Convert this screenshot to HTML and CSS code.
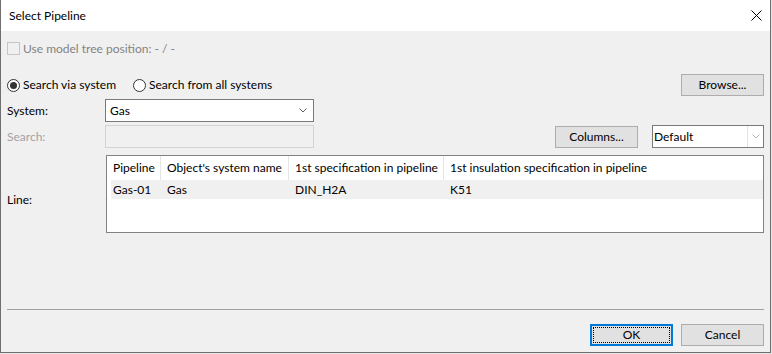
FILE: index.html
```html
<!DOCTYPE html>
<html lang="en">
<head>
  <meta charset="UTF-8">
  <title>Select Pipeline</title>
  <link rel="stylesheet" href="styles.css">
</head>
<body>
  <div class="dialog">
    <header class="titlebar">
      <span class="title">Select Pipeline</span>
      <span class="close">
        <svg width="11" height="11" viewBox="0 0 11 11"><path d="M0.5 0.5L10.5 10.5M10.5 0.5L0.5 10.5" stroke="#000" stroke-width="1" fill="none"/></svg>
      </span>
    </header>

    <main class="content">
      <div class="check-row">
        <span class="checkbox"></span>
        <span>Use model tree position: - / -</span>
      </div>

      <div class="mode-row">
        <label class="radio first"><span class="radio-dot checked"></span>Search via system</label>
        <label class="radio"><span class="radio-dot"></span>Search from all systems</label>
        <button class="btn browse">Browse...</button>
      </div>

      <div class="form">
        <span class="label">System:</span>
        <div class="combo system-combo">
          <span class="combo-text">Gas</span>
          <svg class="chevron" width="8" height="5" viewBox="0 0 8 5"><polyline points="0.5,0.5 4,4 7.5,0.5" stroke="#606060" fill="none"/></svg>
        </div>

        <span class="label disabled">Search:</span>
        <div class="search-row">
          <div class="search-input"></div>
          <button class="btn columns">Columns...</button>
          <div class="combo view-combo">
            <span class="combo-text">Default</span>
            <span class="combo-drop">
              <svg width="8" height="5" viewBox="0 0 8 5"><polyline points="0.5,0.5 4,4 7.5,0.5" stroke="#b4b4b4" fill="none"/></svg>
            </span>
          </div>
        </div>

        <span class="label line-label">Line:</span>
        <div class="list">
          <div class="list-head">
            <span>Pipeline</span>
            <span>Object's system name</span>
            <span>1st specification in pipeline</span>
            <span>1st insulation specification in pipeline</span>
          </div>
          <div class="list-row">
            <span>Gas-01</span>
            <span>Gas</span>
            <span>DIN_H2A</span>
            <span>K51</span>
          </div>
        </div>
      </div>

      <hr class="separator">

      <div class="actions">
        <button class="btn ok">OK</button>
        <button class="btn">Cancel</button>
      </div>
    </main>
  </div>
</body>
</html>
```

FILE: styles.css
```css
html, body {
  margin: 0;
  padding: 0;
  background: #e6e6e6;
}
body {
  font-family: "Segoe UI", Lato, "Noto Sans", sans-serif;
  font-size: 12px;
  line-height: 16px;
  color: #000;
}
.dialog {
  width: 771px;
  height: 353px;
  box-sizing: border-box;
  border: 1px solid #6f6f6f;
  border-top: none;
  background: #f0f0f0;
  display: flex;
  flex-direction: column;
}
.titlebar {
  height: 31px;
  background: #fff;
  display: flex;
  align-items: center;
  padding-left: 8px;
  flex-shrink: 0;
}
.title {
  flex: 1;
  padding-top: 1px;
}
.close {
  width: 28px;
  height: 31px;
  display: flex;
  align-items: center;
  justify-content: center;
}
.content {
  padding: 0 6px 0 6px;
  display: flex;
  flex-direction: column;
}

/* checkbox row */
.check-row {
  margin-top: 11px;
  height: 13px;
  display: flex;
  align-items: center;
  color: #838383;
}
.checkbox {
  width: 11px;
  height: 11px;
  border: 1px solid #c6c6c6;
  background: #f0f0f0;
  margin-right: 3px;
}

/* search mode */
.mode-row {
  margin-top: 19px;
  height: 22px;
  display: flex;
  align-items: center;
}
.radio {
  display: flex;
  align-items: center;
}
.radio.first {
  width: 126px;
}
.radio-dot {
  width: 11px;
  height: 11px;
  border: 1px solid #333;
  border-radius: 50%;
  background: #fff;
  margin-right: 3px;
  display: flex;
  align-items: center;
  justify-content: center;
}
.radio-dot.checked::after {
  content: "";
  width: 7px;
  height: 7px;
  border-radius: 50%;
  background: #333;
}
.btn {
  font: inherit;
  color: #000;
  background: #e1e1e1;
  border: 1px solid #adadad;
  width: 83px;
  height: 22px;
  padding: 0;
  border-radius: 0;
}
.browse {
  margin-left: auto;
}

/* form grid */
.form {
  margin-top: 3px;
  display: grid;
  grid-template-columns: 98px 1fr;
  row-gap: 3px;
}
.label {
  display: flex;
  align-items: center;
}
.label.disabled {
  color: #a3a3a3;
}
.combo {
  height: 23px;
  box-sizing: border-box;
  border: 1px solid #7a7a7a;
  background: #fff;
  display: flex;
  align-items: center;
}
.system-combo {
  width: 209px;
  padding: 0 4px 0 4px;
}
.combo-text {
  flex: 1;
}
.chevron {
  margin-right: 2px;
}
.search-row {
  display: flex;
  align-items: center;
}
.search-input {
  width: 209px;
  height: 23px;
  box-sizing: border-box;
  border: 1px solid #d4d4d4;
  background: #f0f0f0;
}
.columns {
  margin-left: auto;
  margin-right: 14px;
}
.view-combo {
  width: 112px;
  padding-left: 1px;
}
.combo-drop {
  width: 15px;
  height: 21px;
  border-left: 1px solid #e3e3e3;
  display: flex;
  align-items: center;
  justify-content: center;
}

/* list */
.line-label {
  align-items: flex-start;
  padding-top: 41px;
}
.list {
  margin-top: 4px;
  margin-left: 1px;
  height: 78px;
  box-sizing: border-box;
  border: 1px solid #828282;
  background: #fff;
}
.list-head,
.list-row {
  display: grid;
  grid-template-columns: 54px 128px 155px 1fr;
  white-space: nowrap;
}
.list-head span {
  height: 24px;
  line-height: 24px;
  padding-left: 6px;
  border-right: 1px solid #e5e5e5;
}
.list-head span:last-child {
  border-right: none;
}
.list-row {
  grid-template-columns: 50px 128px 155px 1fr;
  margin-left: 4px;
  background: #f0f0f0;
}
.list-row span {
  height: 19px;
  line-height: 19px;
  padding-left: 6px;
}
.list-row span:first-child {
  padding-left: 2px;
}

/* footer */
.separator {
  margin: 76px 0 0 0;
  border: none;
  border-top: 1px solid #a0a0a0;
  height: 0;
}
.actions {
  margin-top: 14px;
  display: flex;
  justify-content: flex-end;
  gap: 8px;
}
.btn.ok {
  border: 2px solid #0078d7;
  outline: 1px dotted #000;
  outline-offset: -4px;
}
```
